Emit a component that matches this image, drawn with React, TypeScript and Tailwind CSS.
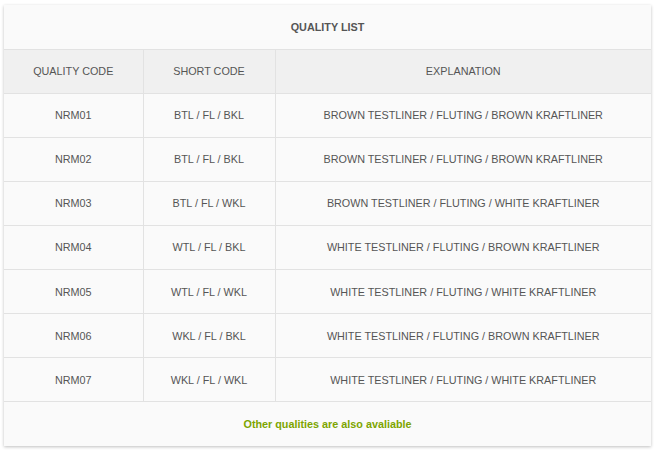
import React from 'react';

const rows = [
    ['NRM01', 'BTL / FL / BKL', 'BROWN TESTLINER / FLUTING / BROWN KRAFTLINER'],
    ['NRM02', 'BTL / FL / BKL', 'BROWN TESTLINER / FLUTING / BROWN KRAFTLINER'],
    ['NRM03', 'BTL / FL / WKL', 'BROWN TESTLINER / FLUTING / WHITE KRAFTLINER'],
    ['NRM04', 'WTL / FL / BKL', 'WHITE TESTLINER / FLUTING / BROWN KRAFTLINER'],
    ['NRM05', 'WTL / FL / WKL', 'WHITE TESTLINER / FLUTING / WHITE KRAFTLINER'],
    ['NRM06', 'WKL / FL / BKL', 'WHITE TESTLINER / FLUTING / BROWN KRAFTLINER'],
    ['NRM07', 'WKL / FL / WKL', 'WHITE TESTLINER / FLUTING / WHITE KRAFTLINER'],
];

const App: React.FC = () => {
    return (
        <div className="bg-white min-h-screen pt-[5px] pl-[4px]" style={{ fontFamily: '"Liberation Sans", Arial, sans-serif' }}>
            <div className="w-[647px] bg-[#fafafa] shadow-[0_1px_3px_rgba(0,0,0,0.25)]">
                <table className="w-full border-collapse text-[10.8px] text-[#555] text-center">
                    <colgroup>
                        <col className="w-[139px]" />
                        <col className="w-[132px]" />
                        <col />
                    </colgroup>
                    <thead>
                        <tr className="h-[44px]">
                            <th colSpan={3} className="font-bold border-b border-[#e2e2e2]">QUALITY LIST</th>
                        </tr>
                        <tr className="h-[44px] bg-[#f0f0f0]">
                            <th className="font-normal border-b border-r border-[#e2e2e2]">QUALITY CODE</th>
                            <th className="font-normal border-b border-r border-[#e2e2e2]">SHORT CODE</th>
                            <th className="font-normal border-b border-[#e2e2e2]">EXPLANATION</th>
                        </tr>
                    </thead>
                    <tbody>
                        {rows.map(r => (
                            <tr key={r[0]} className="h-[44.15px]">
                                <td className="border-b border-r border-[#e2e2e2]">{r[0]}</td>
                                <td className="border-b border-r border-[#e2e2e2]">{r[1]}</td>
                                <td className="border-b border-[#e2e2e2]">{r[2]}</td>
                            </tr>
                        ))}
                        <tr className="h-[44px]">
                            <td colSpan={3} className="font-bold text-[#7da500]">Other qualities are also avaliable</td>
                        </tr>
                    </tbody>
                </table>
            </div>
        </div>
    );
};

export default App;
